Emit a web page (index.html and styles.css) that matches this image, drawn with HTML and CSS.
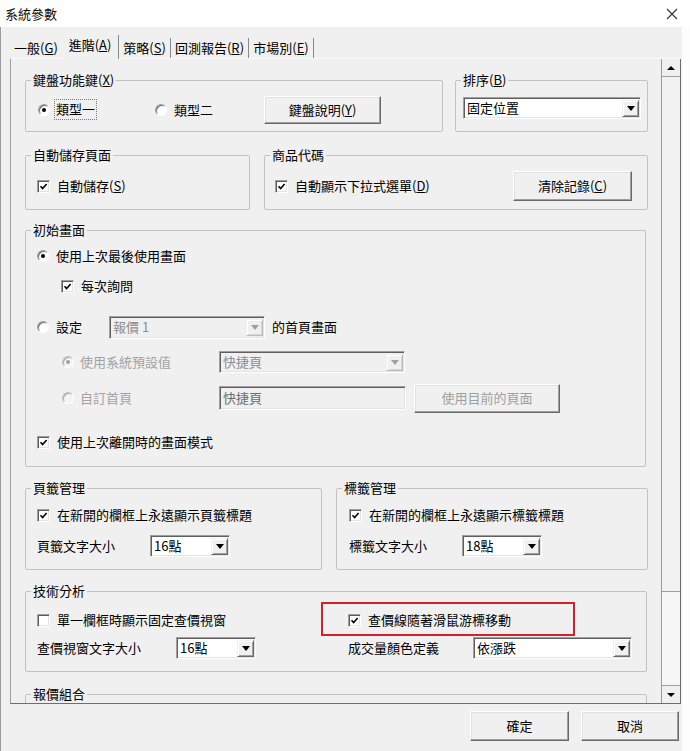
FILE: index.html
```html
<!DOCTYPE html>
<html lang="zh-Hant">
<head>
<meta charset="utf-8">
<title>系統參數</title>
<link rel="stylesheet" href="styles.css">
</head>
<body>
<div class="screen">
  <div class="titlebar">
    <span class="title">系統參數</span>
    <svg class="close" width="12" height="12" viewBox="0 0 12 12"><path d="M1 1 L11 11 M11 1 L1 11" stroke="#333" stroke-width="1.1" fill="none"/></svg>
  </div>
  <div class="main">
    <div class="client">
      <div class="tabs">
        <div class="tab t1">一般(<u>G</u>)</div>
        <div class="tab t2 active">進階(<u>A</u>)</div>
        <div class="tab t3">策略(<u>S</u>)</div>
        <div class="tab t4">回測報告(<u>R</u>)</div>
        <div class="tab t5">市場別(<u>E</u>)</div>
      </div>
      <div class="page">
        <div class="scrollview">
          <div class="row row1">
            <fieldset class="grp g-keys">
              <legend>鍵盤功能鍵(<u>X</u>)</legend>
              <div class="inner in-keys">
                <div class="opt w-r1"><span class="radio on"></span><span class="focus">類型一</span></div>
                <div class="opt w-r2"><span class="radio"></span><span>類型二</span></div>
                <button class="btn b-keys">鍵盤說明(<u>Y</u>)</button>
              </div>
            </fieldset>
            <fieldset class="grp g-sort">
              <legend>排序(<u>B</u>)</legend>
              <div class="inner in-sort">
                <div class="combo c-sort"><span class="val">固定位置</span><span class="arrow"></span></div>
              </div>
            </fieldset>
          </div>

          <div class="row row2">
            <fieldset class="grp g-auto">
              <legend>自動儲存頁面</legend>
              <div class="inner in-auto">
                <div class="opt"><span class="chk"><svg width="9" height="9" viewBox="0 0 9 9"><path d="M1.5 4.2 L3.6 6.5 L7.6 2" stroke="#000" stroke-width="1.6" fill="none"/></svg></span><span>自動儲存(<u>S</u>)</span></div>
              </div>
            </fieldset>
            <fieldset class="grp g-code">
              <legend>商品代碼</legend>
              <div class="inner in-code">
                <div class="opt"><span class="chk"><svg width="9" height="9" viewBox="0 0 9 9"><path d="M1.5 4.2 L3.6 6.5 L7.6 2" stroke="#000" stroke-width="1.6" fill="none"/></svg></span><span>自動顯示下拉式選單(<u>D</u>)</span></div>
                <button class="btn b-clear">清除記錄(<u>C</u>)</button>
              </div>
            </fieldset>
          </div>

          <div class="row row3">
            <fieldset class="grp g-init">
              <legend>初始畫面</legend>
              <div class="inner in-init">
                <div class="line la">
                  <div class="opt"><span class="radio on"></span><span>使用上次最後使用畫面</span></div>
                </div>
                <div class="line lb">
                  <div class="opt"><span class="chk"><svg width="9" height="9" viewBox="0 0 9 9"><path d="M1.5 4.2 L3.6 6.5 L7.6 2" stroke="#000" stroke-width="1.6" fill="none"/></svg></span><span>每次詢問</span></div>
                </div>
                <div class="line lc">
                  <div class="opt w-set"><span class="radio"></span><span>設定</span></div>
                  <div class="combo dis c-quote"><span class="val">報價 1</span><span class="arrow"></span></div>
                  <span class="after-combo">的首頁畫面</span>
                </div>
                <div class="line ld">
                  <div class="opt w-sub gray"><span class="radio dis on"></span><span>使用系統預設值</span></div>
                  <div class="combo dis c-fast"><span class="val">快捷頁</span><span class="arrow"></span></div>
                </div>
                <div class="line le">
                  <div class="opt w-sub gray"><span class="radio dis"></span><span>自訂首頁</span></div>
                  <div class="textbox dis">快捷頁</div>
                  <button class="btn b-cur" disabled>使用目前的頁面</button>
                </div>
                <div class="line lf">
                  <div class="opt"><span class="chk"><svg width="9" height="9" viewBox="0 0 9 9"><path d="M1.5 4.2 L3.6 6.5 L7.6 2" stroke="#000" stroke-width="1.6" fill="none"/></svg></span><span>使用上次離開時的畫面模式</span></div>
                </div>
              </div>
            </fieldset>
          </div>

          <div class="row row4">
            <fieldset class="grp g-tab">
              <legend>頁籤管理</legend>
              <div class="inner in-tab">
                <div class="line l1">
                  <div class="opt"><span class="chk"><svg width="9" height="9" viewBox="0 0 9 9"><path d="M1.5 4.2 L3.6 6.5 L7.6 2" stroke="#000" stroke-width="1.6" fill="none"/></svg></span><span>在新開的欄框上永遠顯示頁籤標題</span></div>
                </div>
                <div class="line l2">
                  <span class="lab w-size">頁籤文字大小</span>
                  <div class="combo c-small"><span class="val">16點</span><span class="arrow"></span></div>
                </div>
              </div>
            </fieldset>
            <fieldset class="grp g-lbl">
              <legend>標籤管理</legend>
              <div class="inner in-lbl">
                <div class="line l1">
                  <div class="opt"><span class="chk"><svg width="9" height="9" viewBox="0 0 9 9"><path d="M1.5 4.2 L3.6 6.5 L7.6 2" stroke="#000" stroke-width="1.6" fill="none"/></svg></span><span>在新開的欄框上永遠顯示標籤標題</span></div>
                </div>
                <div class="line l2">
                  <span class="lab w-size">標籤文字大小</span>
                  <div class="combo c-small"><span class="val">18點</span><span class="arrow"></span></div>
                </div>
              </div>
            </fieldset>
          </div>

          <div class="row row5">
            <fieldset class="grp g-tech">
              <legend>技術分析</legend>
              <div class="inner in-tech">
                <div class="line l1">
                  <div class="opt col1"><span class="chk"></span><span>單一欄框時顯示固定查價視窗</span></div>
                  <div class="opt col2"><span class="chk"><svg width="9" height="9" viewBox="0 0 9 9"><path d="M1.5 4.2 L3.6 6.5 L7.6 2" stroke="#000" stroke-width="1.6" fill="none"/></svg></span><span>查價線隨著滑鼠游標移動</span><span class="mark"></span></div>
                </div>
                <div class="line l2">
                  <div class="col1 pair">
                    <span class="lab w-q">查價視窗文字大小</span>
                    <div class="combo c-small"><span class="val">16點</span><span class="arrow"></span></div>
                  </div>
                  <div class="col2 pair">
                    <span class="lab w-v">成交量顏色定義</span>
                    <div class="combo c-vol"><span class="val">依漲跌</span><span class="arrow"></span></div>
                  </div>
                </div>
              </div>
            </fieldset>
          </div>

          <div class="row row6">
            <fieldset class="grp g-quote">
              <legend>報價組合</legend>
              <div class="inner in-quote"></div>
            </fieldset>
          </div>
        </div>
        <div class="scrollbar">
          <div class="sb-btn sb-up"><span class="tri-up"></span></div>
          <div class="sb-thumb"></div>
          <div class="sb-track"></div>
          <div class="sb-btn sb-down"><span class="tri-down"></span></div>
        </div>
      </div>
      <div class="footer">
        <button class="btn b-ok">確定</button>
        <button class="btn b-cancel">取消</button>
      </div>
    </div>
    <div class="desk"></div>
  </div>
</div>
</body>
</html>
```

FILE: styles.css
```css
* { box-sizing: border-box; }
html, body { margin: 0; padding: 0; }
body {
  width: 690px;
  height: 751px;
  overflow: hidden;
  background: #fff;
  font-family: "Noto Sans CJK TC", "Noto Sans", sans-serif;
  font-size: 13px;
  line-height: 16px;
  color: #000;
}
u { text-decoration: underline; text-underline-offset: 1px; }

.screen { width: 690px; height: 751px; display: flex; flex-direction: column; }

.titlebar {
  height: 27px;
  flex: none;
  background: #fff;
  display: flex;
  align-items: center;
  justify-content: space-between;
  padding: 0 12px 0 5px;
}
.title { font-size: 13px; color: #111; }
.close { display: block; }

.main { flex: 1; display: flex; min-height: 0; }
.client {
  width: 682px;
  flex: none;
  background: #f0f0f0;
  border-left: 1px solid #9c9c9c;
  padding-left: 9px;
  display: flex;
  flex-direction: column;
}
.desk { flex: 1; background: #fdfdfd; }

/* tabs */
.tabs { height: 31px; display: flex; align-items: flex-end; flex: none; }
.tab {
  height: 20px;
  display: flex;
  align-items: center;
  justify-content: center;
  border-right: 1px solid #8a8a8a;
  white-space: nowrap;
}
.t1 { width: 52px; border-right: none; }
.t2 { width: 57px; }
.t3 { width: 52px; }
.t4 { width: 78px; }
.t5 { width: 65px; }
.tab.active {
  height: 24px;
  padding-bottom: 5px;
  margin-bottom: -1px;
  background: #f0f0f0;
  position: relative;
  z-index: 1;
}

/* page */
.page {
  width: 671px;
  height: 646px;
  flex: none;
  display: flex;
  border-left: 1px solid #a0a0a0;
  border-top: 1px solid #fafafa;
  border-bottom: 1px solid #6e6e6e;
}
.scrollview {
  width: 650px;
  height: 100%;
  overflow: hidden;
  padding: 13px 0 0 14px;
}
.scrollbar {
  width: 20px;
  height: 100%;
  display: flex;
  flex-direction: column;
  border-left: 1px solid #9a9a9a;
  border-right: 1px solid #6e6e6e;
  background: #f0f0f0;
}
.sb-btn { display: flex; align-items: center; justify-content: center; flex: none; }
.sb-up { height: 18px; border-bottom: 1px solid #a0a0a0; }
.sb-thumb { height: 515px; border-bottom: 1px solid #a0a0a0; background: #f2f2f2; }
.sb-track { flex: 1; background: #f7f7f7; }
.sb-down { height: 18px; border-top: 1px solid #a0a0a0; }
.tri-up { width: 0; height: 0; border-left: 4px solid transparent; border-right: 4px solid transparent; border-bottom: 4px solid #000; }
.tri-down { width: 0; height: 0; border-left: 4px solid transparent; border-right: 4px solid transparent; border-top: 4px solid #000; }

/* groups */
.row { display: flex; }
.row2 { margin-top: 15px; }
.row3 { margin-top: 12px; }
.row4 { margin-top: 13px; }
.row5 { margin-top: 13px; }
.row6 { margin-top: 14px; }

.grp {
  margin: 0;
  padding: 0;
  min-width: 0;
  border: 1px solid #c2c2c2;
  border-radius: 2px;
}
.grp legend {
  margin-left: 5px;
  padding: 0 2px;
  line-height: 16px;
  font-size: 13px;
}
.g-keys { width: 418px; }
.g-sort { width: 193px; margin-left: 12px; }
.g-auto { width: 225px; }
.g-code { width: 384px; margin-left: 14px; }
.g-init { width: 621px; }
.g-tab { width: 297px; }
.g-lbl { width: 312px; margin-left: 14px; }
.g-tech { width: 622px; }
.g-quote { width: 622px; }

.inner { display: flex; }
.in-keys { height: 43px; align-items: center; padding-left: 12px; }
.in-sort { height: 43px; padding: 9px 0 0 7px; }
.in-auto { height: 46px; align-items: center; padding-left: 11px; }
.in-code { height: 46px; align-items: center; padding: 0 15px 0 10px; justify-content: space-between; }
.in-init { height: 228px; flex-direction: column; padding-left: 11px; }
.in-tab { height: 73px; flex-direction: column; padding-left: 11px; }
.in-lbl { height: 73px; flex-direction: column; padding-left: 12px; }
.in-tech { height: 72px; flex-direction: column; padding-left: 11px; }
.in-quote { height: 80px; }

.line { display: flex; align-items: center; }
.in-init .la { height: 36px; }
.in-init .lb { height: 24px; padding-left: 24px; }
.in-init .lc { height: 30px; margin-top: 14px; }
.in-init .ld { height: 24px; margin-top: 8px; padding-left: 25px; }
.in-init .le { height: 28px; margin-top: 10px; padding-left: 25px; }
.in-init .lf { height: 24px; margin-top: 18px; }
.in-tab .l1, .in-lbl .l1 { height: 24px; margin-top: 7px; }
.in-tab .l2, .in-lbl .l2 { height: 24px; margin-top: 7px; }
.in-tech .l1 { height: 24px; margin-top: 9px; }
.in-tech .l2 { height: 24px; margin-top: 4px; }

.opt { display: flex; align-items: center; gap: 7px; white-space: nowrap; }
.w-r1 { width: 117px; gap: 4px; }
.w-r2 { width: 109px; }
.w-set { width: 72px; }
.w-sub { width: 157px; gap: 6px; }
.gray { color: #a3a3a3; }
.focus { border: 1px dotted #7a7a7a; padding: 1px 1px 2px; line-height: 16px; }
.after-combo { margin-left: 7px; }
.lab { white-space: nowrap; }
.w-size { width: 113px; }
.w-q { width: 139px; }
.w-v { width: 125px; }
.col1 { width: 311px; }
.col2 { position: relative; }
.pair { display: flex; align-items: center; }

/* controls */
.chk {
  width: 13px;
  height: 13px;
  flex: none;
  background: #fff;
  border: 1px solid;
  border-color: #a0a0a0 #fff #fff #a0a0a0;
  box-shadow: inset 1px 1px 0 #5a5a5a, inset -1px -1px 0 #e3e3e3;
  display: flex;
  align-items: center;
  justify-content: center;
}
.chk svg { display: block; }

.radio {
  width: 12px;
  height: 12px;
  flex: none;
  border-radius: 50%;
  background: #fff;
  border: 1px solid;
  border-color: #a0a0a0 #fff #fff #a0a0a0;
  box-shadow: inset 1px 1px 0 #6a6a6a;
  position: relative;
}
.radio.on::after {
  content: "";
  position: absolute;
  left: 3px;
  top: 3px;
  width: 4px;
  height: 4px;
  border-radius: 50%;
  background: #000;
}
.radio.dis {
  background: #f4f4f4;
  border-color: #c4c4c4 #fff #fff #c4c4c4;
  box-shadow: inset 1px 1px 0 #a8a8a8;
}
.radio.dis.on::after { background: #a0a0a0; }

.combo {
  height: 22px;
  display: flex;
  align-items: center;
  background: #fff;
  border: 1px solid;
  border-color: #a0a0a0 #fff #fff #a0a0a0;
  box-shadow: inset 1px 1px 0 #5f5f5f, inset -1px -1px 0 #e3e3e3;
  padding: 1px 1px 1px 3px;
}
.combo .val { flex: 1; white-space: nowrap; }
.combo .arrow {
  width: 17px;
  height: 17px;
  flex: none;
  background: #f0f0f0;
  border: 1px solid;
  border-color: #f0f0f0 #6a6a6a #6a6a6a #f0f0f0;
  box-shadow: inset 1px 1px 0 #fff, inset -1px -1px 0 #a0a0a0;
  display: flex;
  align-items: center;
  justify-content: center;
}
.combo .arrow::after {
  content: "";
  width: 0;
  height: 0;
  border-left: 4px solid transparent;
  border-right: 4px solid transparent;
  border-top: 5px solid #000;
}
.combo.dis { background: #f0f0f0; }
.combo.dis .val { color: #8d8d8d; }
.combo.dis .arrow { border-color: #f0f0f0 #bdbdbd #bdbdbd #f0f0f0; box-shadow: inset 1px 1px 0 #fff, inset -1px -1px 0 #d6d6d6; }
.combo.dis .arrow::after { border-top-color: #a0a0a0; }
.c-sort { width: 178px; }
.c-quote { width: 156px; height: 23px; }
.c-fast { width: 186px; height: 22px; }
.c-fast .val { color: #6d6d6d; }
.c-small { width: 80px; }
.c-vol { width: 159px; }

.textbox {
  width: 187px;
  height: 24px;
  display: flex;
  align-items: center;
  padding-left: 3px;
  border: 1px solid;
  border-color: #a0a0a0 #fff #fff #a0a0a0;
  box-shadow: inset 1px 1px 0 #5f5f5f, inset -1px -1px 0 #e3e3e3;
  background: #f0f0f0;
  color: #6d6d6d;
}

.btn {
  font: inherit;
  line-height: 16px;
  color: #000;
  background: #f0f0f0;
  border: 1px solid;
  border-color: #fff #6a6a6a #6a6a6a #fff;
  box-shadow: inset -1px -1px 0 #a0a0a0, inset 1px 1px 0 #e3e3e3;
  padding: 0;
  margin: 0;
  display: inline-flex;
  align-items: center;
  justify-content: center;
  white-space: nowrap;
  flex: none;
}
.btn[disabled] { color: #a0a0a0; }
.b-keys { width: 117px; height: 28px; }
.b-clear { width: 119px; height: 30px; }
.b-cur { width: 146px; height: 29px; margin-left: 8px; }

.footer {
  flex: 1;
  display: flex;
  justify-content: flex-end;
  align-items: flex-start;
  gap: 12px;
  padding: 7px 3px 0 0;
}
.b-ok { width: 99px; height: 30px; }
.b-cancel { width: 98px; height: 30px; }

/* red annotation box */
.mark {
  position: absolute;
  left: -27px;
  top: -10px;
  width: 254px;
  height: 34px;
  border: 2px solid #d4202c;
  pointer-events: none;
}
```
